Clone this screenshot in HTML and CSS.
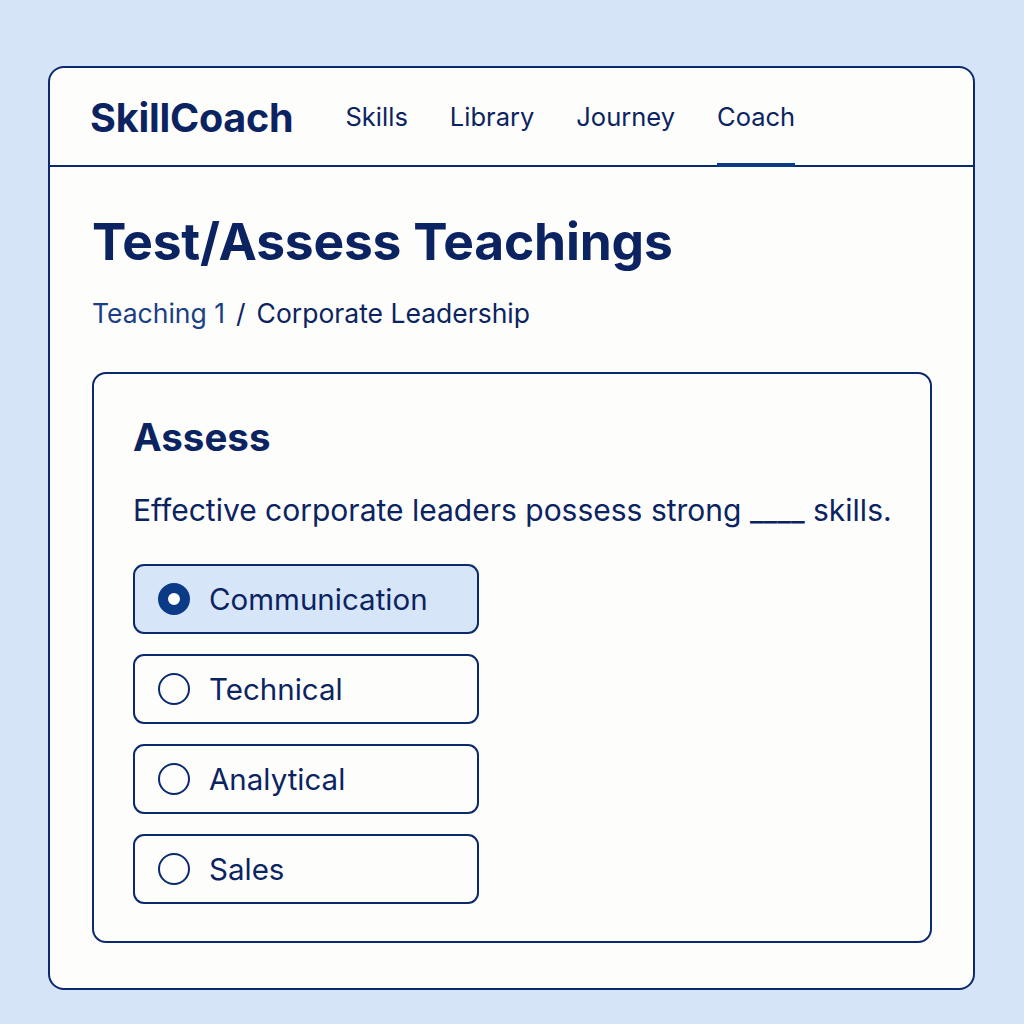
FILE: index.html
```html
<!DOCTYPE html>
<html lang="en">
<head>
<meta charset="utf-8">
<title>SkillCoach – Test/Assess Teachings</title>
<link rel="stylesheet" href="styles.css">
</head>
<body>
<div class="app">
  <header class="topbar">
    <div class="logo">SkillCoach</div>
    <nav class="nav">
      <a class="nav-item">Skills</a>
      <a class="nav-item">Library</a>
      <a class="nav-item">Journey</a>
      <a class="nav-item active">Coach</a>
    </nav>
  </header>
  <main class="content">
    <h1 class="title">Test/Assess Teachings</h1>
    <div class="crumbs"><span class="crumb-link">Teaching 1</span><span class="sep">/</span><span>Corporate Leadership</span></div>
    <section class="panel">
      <h2 class="panel-title">Assess</h2>
      <p class="question">Effective corporate leaders possess strong ____ skills.</p>
      <div class="options">
        <label class="option selected"><span class="radio"></span><span>Communication</span></label>
        <label class="option"><span class="radio"></span><span>Technical</span></label>
        <label class="option"><span class="radio"></span><span>Analytical</span></label>
        <label class="option"><span class="radio"></span><span>Sales</span></label>
      </div>
    </section>
  </main>
</div>
</body>
</html>
```
FILE: styles.css
```css
* { box-sizing: border-box; }
html, body { margin: 0; padding: 0; }
body {
  background: #d5e5f7;
  font-family: Inter, "Noto Sans", "Liberation Sans", sans-serif;
  color: #0b2461;
  padding: 66px 49px 34px 48px;
  height: 1024px;
}
.app {
  height: 924px;
  background: #fdfdfc;
  border: 2px solid #0b2a6e;
  border-radius: 16px;
  display: flex;
  flex-direction: column;
}
.topbar {
  height: 99px;
  border-bottom: 2px solid #0b2a6e;
  display: flex;
  align-items: stretch;
  padding-left: 40px;
}
.logo {
  font-size: 39.5px;
  font-weight: 700;
  letter-spacing: -0.2px;
  display: flex;
  align-items: center;
  margin-right: 52px;
  padding-top: 2px;
}
.nav { display: flex; gap: 42px; }
.nav-item {
  font-size: 25.5px;
  display: flex;
  align-items: center;
  padding-top: 2px;
  border-bottom: 4px solid transparent;
  margin-bottom: -2px;
}
.nav-item.active { border-bottom-color: #0b3a86; }
.content {
  padding: 45px 41px 0 42px;
  flex: 1;
  display: flex;
  flex-direction: column;
}
.title {
  margin: 0;
  font-size: 51.5px;
  font-weight: 700;
  line-height: 58px;
  letter-spacing: -0.2px;
}
.crumbs {
  margin-top: 27px;
  font-size: 26.5px;
  line-height: 32px;
  display: flex;
  gap: 11px;
}
.crumb-link { color: #1a3f86; }
.panel {
  margin-top: 43px;
  border: 2px solid #0b2a6e;
  border-radius: 14px;
  height: 571px;
  padding: 41px 30px 0 39px;
}
.panel-title {
  margin: 0;
  font-size: 38.5px;
  font-weight: 700;
  line-height: 44px;
}
.question {
  margin: 32px 0 0;
  font-size: 30px;
  line-height: 38px;
  white-space: nowrap;
}
.options {
  margin-top: 35px;
  display: flex;
  flex-direction: column;
  gap: 20px;
  width: 346px;
}
.option {
  height: 70px;
  border: 2px solid #0b2a6e;
  border-radius: 11px;
  display: flex;
  align-items: center;
  padding-left: 23px;
  gap: 19px;
  font-size: 29.5px;
}
.option.selected { background: #d6e6f8; }
.radio {
  width: 32px;
  height: 32px;
  border-radius: 50%;
  border: 2.5px solid #0b2a6e;
  flex: none;
}
.option.selected .radio {
  border: 10px solid #0b3a86;
  background: #fff;
}
```
